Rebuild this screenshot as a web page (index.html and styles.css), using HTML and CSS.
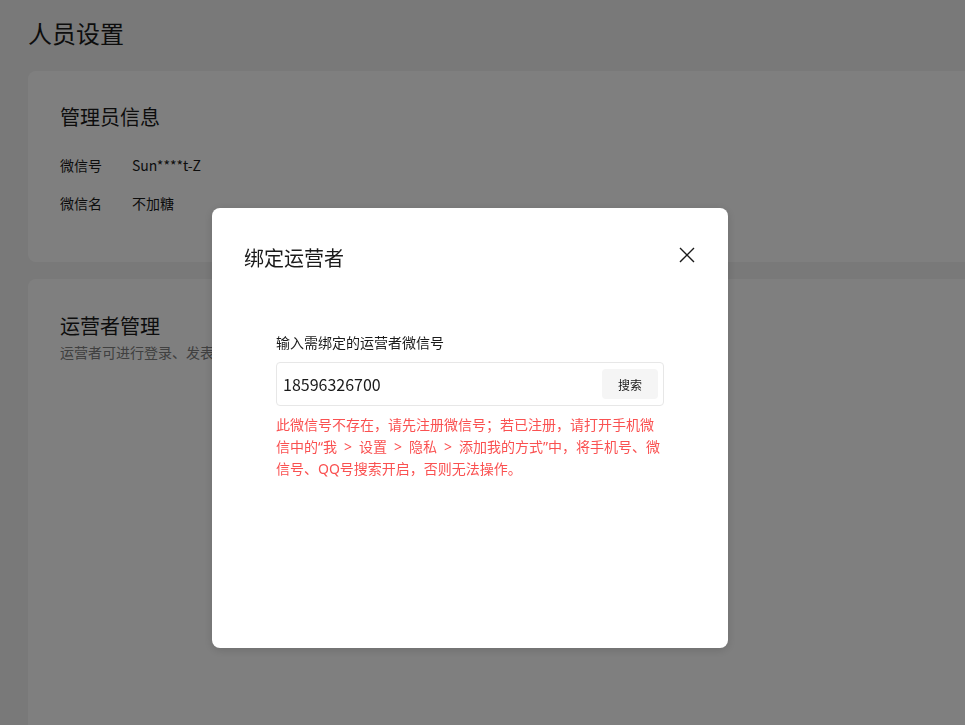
FILE: index.html
```html
<!DOCTYPE html>
<html lang="zh-CN">
<head>
<meta charset="utf-8">
<title>人员设置</title>
<link rel="stylesheet" href="styles.css">
</head>
<body>
<div class="page">
  <h1 class="page-title">人员设置</h1>
  <section class="card card-admin">
    <h2 class="card-title">管理员信息</h2>
    <div class="info-row"><span class="info-label">微信号</span><span class="info-value">Sun****t-Z</span></div>
    <div class="info-row"><span class="info-label">微信名</span><span class="info-value">不加糖</span></div>
  </section>
  <section class="card card-ops">
    <h2 class="card-title">运营者管理</h2>
    <p class="card-desc">运营者可进行登录、发表文章、查看数据等操作</p>
  </section>
</div>
<div class="mask">
  <div class="dialog">
    <div class="dialog-head">
      <h3 class="dialog-title">绑定运营者</h3>
      <button class="dialog-close" aria-label="关闭">
        <svg width="16" height="16" viewBox="0 0 16 16"><path d="M1 1L15 15M15 1L1 15" stroke="#1a1a1a" stroke-width="1.4" fill="none"/></svg>
      </button>
    </div>
    <div class="dialog-body">
      <div class="field-label">输入需绑定的运营者微信号</div>
      <div class="search-box">
        <span class="search-input">18596326700</span>
        <button class="search-btn">搜索</button>
      </div>
      <p class="error-msg">此微信号不存在，请先注册微信号；若已注册，请打开手机微信中的“我&ensp;&gt;&ensp;设置&ensp;&gt;&ensp;隐私&ensp;&gt;&ensp;添加我的方式”中，将手机号、微信号、QQ号搜索开启，否则无法操作。</p>
    </div>
  </div>
</div>
</body>
</html>
```

FILE: styles.css
```css
* { box-sizing: border-box; }
html, body {
  margin: 0;
  padding: 0;
  height: 100%;
  overflow: hidden;
}
body {
  background: #f2f2f2;
  font-family: "Noto Sans CJK SC", "Noto Sans", sans-serif;
  color: #1a1a1a;
}
.page {
  width: 1100px;
  padding: 16px 0 0 28px;
}
.page-title {
  margin: 0;
  font-size: 24px;
  font-weight: 400;
  line-height: 34px;
  color: #1a1a1a;
}
.card {
  background: #fff;
  border-radius: 8px;
  padding: 32px 32px;
}
.card-admin {
  margin-top: 21px;
  height: 191px;
}
.card-ops {
  margin-top: 17px;
  height: 600px;
  padding-top: 33px;
}
.card-title {
  margin: 0;
  font-size: 20px;
  font-weight: 400;
  line-height: 28px;
  color: #1a1a1a;
}
.card-admin .card-title { margin-bottom: 24px; }
.info-row {
  display: flex;
  font-size: 14px;
  line-height: 20px;
  margin-bottom: 18px;
}
.info-label {
  width: 72px;
  color: #1a1a1a;
}
.info-value { color: #1a1a1a; }
.card-desc {
  margin: 2px 0 0;
  font-size: 14px;
  line-height: 20px;
  color: #808080;
}
.mask {
  position: fixed;
  inset: 0;
  background: rgba(0, 0, 0, 0.5);
}
.dialog {
  position: absolute;
  left: 212px;
  top: 208px;
  width: 516px;
  height: 440px;
  background: #fff;
  border-radius: 8px;
  box-shadow: 0 2px 10px rgba(0, 0, 0, 0.15);
  padding: 36px 32px 0 32px;
}
.dialog-head {
  display: flex;
  justify-content: space-between;
  align-items: center;
}
.dialog-title {
  margin: 0;
  font-size: 20px;
  font-weight: 400;
  line-height: 28px;
  color: #1a1a1a;
}
.dialog-close {
  border: 0;
  background: none;
  padding: 0;
  width: 16px;
  height: 16px;
  margin-right: 1px;
  margin-top: -6px;
  display: flex;
}
.dialog-body {
  padding: 60px 32px 0;
}
.field-label {
  font-size: 14px;
  line-height: 20px;
  color: #1a1a1a;
  margin-bottom: 10px;
}
.search-box {
  display: flex;
  align-items: center;
  justify-content: space-between;
  height: 44px;
  border: 1px solid #e7e7e7;
  border-radius: 4px;
  padding: 0 5px 0 6px;
}
.search-input {
  font-size: 16px;
  color: #1a1a1a;
}
.search-btn {
  border: 0;
  width: 56px;
  height: 30px;
  border-radius: 4px;
  background: #f5f5f5;
  font-family: inherit;
  font-size: 12px;
  color: #1a1a1a;
  padding: 0;
}
.error-msg {
  margin: 8px 0 0;
  font-family: "Noto Sans", "Noto Sans CJK SC", sans-serif;
  font-size: 14px;
  line-height: 22px;
  color: #fa5151;
}
```
